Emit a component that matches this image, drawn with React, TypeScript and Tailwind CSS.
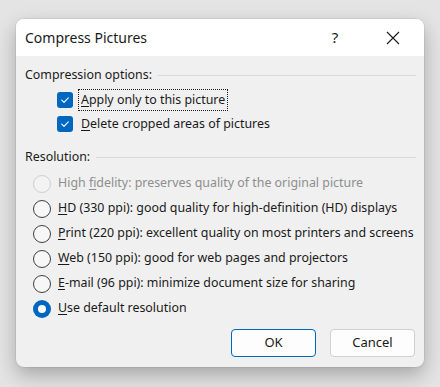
import React from "react";

const font = { fontFamily: '"Noto Sans", "Open Sans", sans-serif' };

function Check({ ul, rest, focus }: { ul: string; rest: string; focus?: boolean }) {
  return (
    <div className="flex items-center h-[24px]">
      <div className="w-[16px] h-[16px] rounded-[3px] bg-[#0067c0] flex items-center justify-center">
        <svg width="10" height="10" viewBox="0 0 10 10">
          <path d="M1.8 5.2 L4 7.3 L8.3 2.8" fill="none" stroke="#ffffff" strokeWidth="1.1" strokeLinecap="round" strokeLinejoin="round" />
        </svg>
      </div>
      <div className={`ml-[6px] px-[2px] h-[20px] flex items-center whitespace-nowrap ${focus ? "outline outline-1 outline-dotted outline-[#1a1a1a]" : ""}`}>
        <span><span className="underline underline-offset-2">{ul}</span>{rest}</span>
      </div>
    </div>
  );
}

function Radio({ ul, rest, pre, disabled, checked }: { ul: string; rest: string; pre?: string; disabled?: boolean; checked?: boolean }) {
  return (
    <div className={`flex items-center h-[25px] whitespace-nowrap ${disabled ? "text-[#8e8e8e]" : ""}`}>
      {checked ? (
        <div className="w-[18px] h-[18px] shrink-0 rounded-full bg-[#0067c0] flex items-center justify-center">
          <div className="w-[8px] h-[8px] rounded-full bg-white" />
        </div>
      ) : (
        <div className={`w-[18px] h-[18px] shrink-0 rounded-full border ${disabled ? "border-[#cfcfcf] bg-[#f3f3f3]" : "border-[#3f3f3f] bg-[#f7f7f7]"}`} />
      )}
      <span className="ml-[7px]">
        {pre}
        <span className="underline underline-offset-2">{ul}</span>
        {rest}
      </span>
    </div>
  );
}

export default function App() {
  return (
    <div className="w-[440px] h-[387px] bg-[#e4e4e4] pt-[19px] pl-[16px] overflow-hidden" style={font}>
      <div className="w-[408px] h-[348px] rounded-[8px] bg-[#f0f0f0] shadow-[0_8px_20px_rgba(0,0,0,0.28),0_0_0_1px_rgba(0,0,0,0.06)] overflow-hidden text-[12.4px] text-[#1a1a1a] flex flex-col">
        <div className="h-[37px] bg-white flex items-center pl-[9px]">
          <div className="text-[14px] flex-1">Compress Pictures</div>
          <div className="text-[15px] w-[20px] mr-[41px] text-center">?</div>
          <div className="mr-[24px]">
            <svg width="14" height="14" viewBox="0 0 14 14">
              <path d="M1 1 L13 13 M13 1 L1 13" stroke="#1a1a1a" strokeWidth="1.1" />
            </svg>
          </div>
        </div>
        <div className="pl-[9px] pr-[8px] pt-[9px] flex flex-col">
          <div className="flex items-center h-[20px]">
            <span>Compression options:</span>
            <div className="flex-1 ml-[6px] h-px bg-[#d9d9d9]" />
          </div>
          <div className="pl-[32px] flex flex-col mt-[3px]">
            <Check ul="A" rest="pply only to this picture" focus />
            <Check ul="D" rest="elete cropped areas of pictures" />
          </div>
          <div className="flex items-center h-[20px] mt-[11px]">
            <span>Resolution:</span>
            <div className="flex-1 ml-[6px] h-px bg-[#d9d9d9]" />
          </div>
          <div className="pl-[8px] flex flex-col mt-[4px]">
            <Radio disabled pre="High " ul="f" rest="idelity: preserves quality of the original picture" />
            <Radio ul="H" rest="D (330 ppi): good quality for high-definition (HD) displays" />
            <Radio ul="P" rest="rint (220 ppi): excellent quality on most printers and screens" />
            <Radio ul="W" rest="eb (150 ppi): good for web pages and projectors" />
            <Radio ul="E" rest="-mail (96 ppi): minimize document size for sharing" />
            <Radio checked ul="U" rest="se default resolution" />
          </div>
          <div className="flex justify-end gap-[14px] mt-[8px] pr-[1px]">
            <button className="w-[85px] h-[28px] rounded-[4px] bg-[#fdfdfd] border border-[#0067c0] text-[13px]">OK</button>
            <button className="w-[85px] h-[28px] rounded-[4px] bg-[#fdfdfd] border border-[#d0d0d0] text-[13px]">Cancel</button>
          </div>
        </div>
      </div>
    </div>
  );
}
